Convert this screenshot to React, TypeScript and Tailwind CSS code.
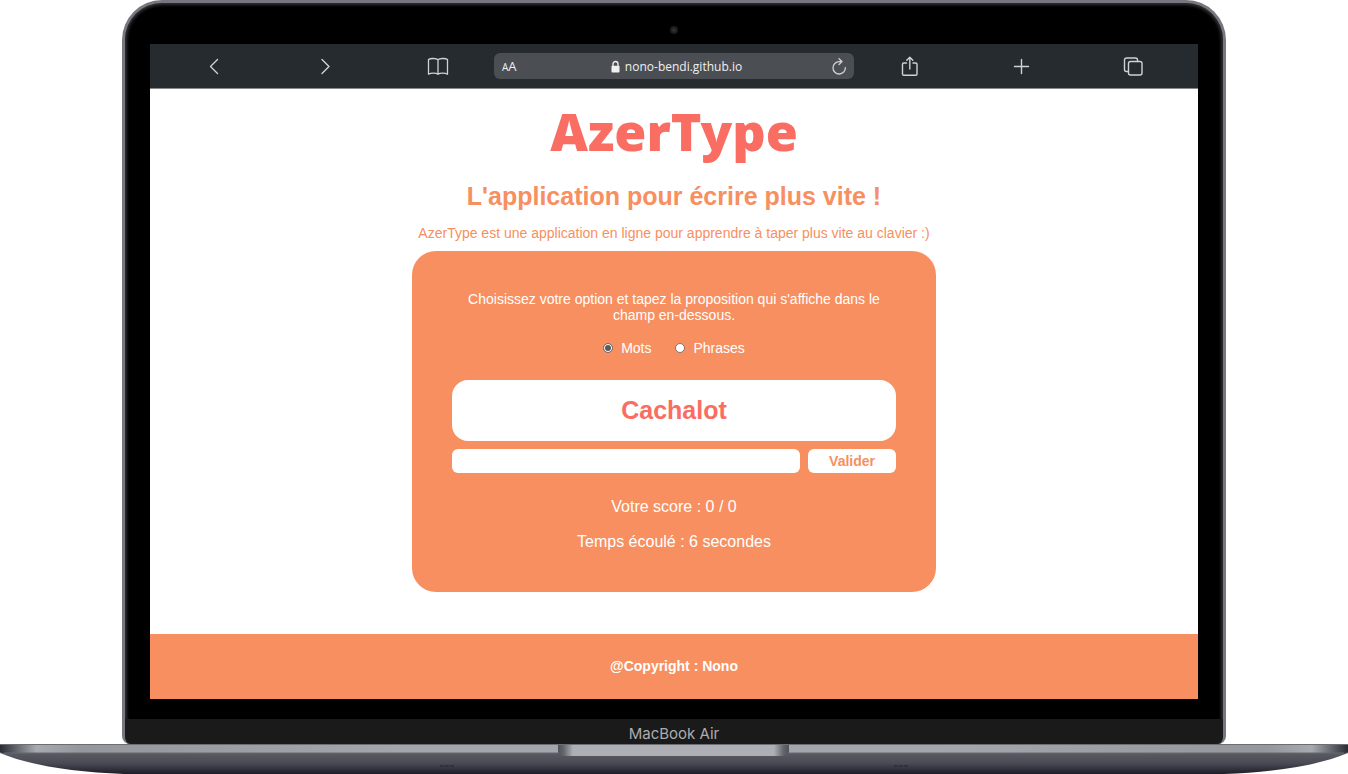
import { useState, type ReactNode } from "react";

function ToolButton({ label, children }: { label: string; children: ReactNode }) {
  return (
    <button type="button" aria-label={label} className="flex h-full items-center justify-center text-[#d0d2d4]">
      <svg width="24" height="24" viewBox="0 0 24 24" fill="none" stroke="currentColor" strokeWidth="1.4" strokeLinecap="round" strokeLinejoin="round" aria-hidden="true">
        {children}
      </svg>
    </button>
  );
}

function BrowserBar() {
  return (
    <div className="grid h-[45px] grid-cols-[repeat(3,1fr)_360px_repeat(3,1fr)] items-center border-b border-[#85888b] bg-[#262b2f] px-2">
      <ToolButton label="Page précédente">
        <path d="M15.5 5.500 8.5 12.500l7 7" />
      </ToolButton>
      <ToolButton label="Page suivante">
        <path d="m8 5.500 7 7-7 7" />
      </ToolButton>
      <ToolButton label="Signets">
        <path d="M12 5.800C10.500 4.200 4.500 4 2.500 5.600V20.200C5 18.800 10 18.800 12 20.300C14 18.800 19 18.800 21.500 20.200V5.600C19.500 4 13.500 4.200 12 5.800ZM12 5.800V20" strokeWidth="1.3" />
      </ToolButton>
      <div className="flex h-[26px] items-center justify-between rounded-md bg-[#4b4e53] pt-px pr-1 pl-2 font-['Open_Sans','Noto_Sans',sans-serif] text-[#f0f0f1]">
        <span className="flex w-5 items-baseline leading-none font-medium" aria-hidden="true">
          <span className="text-[10px]">A</span>
          <span className="text-[13px]">A</span>
        </span>
        <span className="flex items-center gap-1 text-xs">
          <svg width="11" height="14" viewBox="0 0 11 14" aria-hidden="true">
            <path d="M3 6V4a2.500 2.500 0 0 1 5 0V6" fill="none" stroke="currentColor" strokeWidth="1.300" />
            <rect x="1.500" y="5.800" width="8" height="6.700" rx="0.800" fill="currentColor" />
          </svg>
          nono-bendi.github.io
        </span>
        <button type="button" aria-label="Actualiser" className="w-5 text-[#d0d2d4]">
          <svg width="18" height="20" viewBox="1 0 18 20" fill="none" stroke="currentColor" strokeWidth="1.300" strokeLinecap="round" strokeLinejoin="round" aria-hidden="true">
            <path d="M16.400 10.600a6.200 6.200 0 1 1-6.200-6H12.400M10 1.800 13 4.600 10 7.500" />
          </svg>
        </button>
      </div>
      <ToolButton label="Partager">
        <path d="M8.500 9H5.800A1.300 1.300 0 0 0 4.500 10.300V20A1.300 1.300 0 0 0 5.800 21.300H17.700A1.300 1.300 0 0 0 19 20V10.300A1.300 1.300 0 0 0 17.700 9H15M11.800 15V3.500M8.800 6.300 11.800 3.200 14.800 6.300" />
      </ToolButton>
      <ToolButton label="Nouvel onglet">
        <path d="M11.500 5.500v14M4.500 12.500h14" />
      </ToolButton>
      <ToolButton label="Onglets">
        <rect x="6.500" y="7.500" width="13.500" height="13.500" rx="2" />
        <path d="M6.500 17.500H4.500A2 2 0 0 1 2.500 15.500V6A2 2 0 0 1 4.500 4H13.500A2 2 0 0 1 15.500 6V7.500" />
      </ToolButton>
    </div>
  );
}

const options = ["Mots", "Phrases"];

function TypingGame() {
  const [option, setOption] = useState("Mots");
  return (
    <form
      onSubmit={(event) => event.preventDefault()}
      className="mx-auto mt-[10px] flex w-1/2 flex-col rounded-3xl bg-[#f78f61] px-10 pt-10 pb-10 text-center text-white"
    >
      <p className="text-sm leading-4">
        Choisissez votre option et tapez la proposition qui s'affiche dans le champ en-dessous.
      </p>
      <div className="mt-[17px] flex justify-center gap-6 text-sm leading-4">
        {options.map((name) => (
          <label key={name} className="flex items-center gap-2">
            <input
              type="radio"
              name="option"
              value={name}
              checked={option === name}
              onChange={() => setOption(name)}
              className="size-[10px] appearance-none rounded-full border border-[#767676] bg-white checked:bg-[#5a5a5a] checked:shadow-[inset_0_0_0_1px_white]"
            />
            {name}
          </label>
        ))}
      </div>
      <div className="mt-6 flex h-[61px] items-center justify-center rounded-2xl bg-white text-[25px] font-bold text-[#f96d62]">
        Cachalot
      </div>
      <div className="mt-2 flex gap-2">
        <input aria-label="Votre saisie" type="text" className="h-6 min-w-0 flex-1 rounded-md bg-white px-2 text-sm text-black outline-none" />
        <button type="submit" className="h-6 rounded-md bg-white px-[21px] text-sm leading-4 font-bold text-[#f78f61]">
          Valider
        </button>
      </div>
      <p className="mt-6 text-base leading-5">Votre score : 0 / 0</p>
      <p className="mt-[15px] text-base leading-5">Temps écoulé : 6 secondes</p>
    </form>
  );
}

function LaptopBase() {
  return (
    <svg className="block h-[30px] w-full" viewBox="0 0 1348 30" preserveAspectRatio="none" aria-hidden="true">
      <defs>
        <linearGradient id="under" x1="0" y1="8" x2="0" y2="30" gradientUnits="userSpaceOnUse">
          <stop offset="0" stopColor="#5b5d65" />
          <stop offset="0.500" stopColor="#4a4b54" />
          <stop offset="1" stopColor="#1d1d29" />
        </linearGradient>
        <linearGradient id="deck" x1="0" x2="1" y1="0" y2="0">
          <stop offset="0" stopColor="#2b2c33" />
          <stop offset="0.012" stopColor="#63656c" />
          <stop offset="0.027" stopColor="#a9aab0" />
          <stop offset="0.060" stopColor="#96979c" />
          <stop offset="0.300" stopColor="#a5a6ab" />
          <stop offset="0.700" stopColor="#a5a6ab" />
          <stop offset="0.940" stopColor="#96979c" />
          <stop offset="0.973" stopColor="#a9aab0" />
          <stop offset="0.988" stopColor="#63656c" />
          <stop offset="1" stopColor="#2b2c33" />
        </linearGradient>
        <linearGradient id="notch" x1="0" x2="1" y1="0" y2="0">
          <stop offset="0" stopColor="#505158" />
          <stop offset="0.025" stopColor="#66676e" />
          <stop offset="0.065" stopColor="#aeafb4" />
          <stop offset="0.935" stopColor="#aeafb4" />
          <stop offset="0.975" stopColor="#66676e" />
          <stop offset="1" stopColor="#505158" />
        </linearGradient>
      </defs>
      <path d="M0 6V9C28 21 72 28 124 30H1224C1276 28 1320 21 1348 9V6Z" fill="url(#under)" />
      <path d="M0 0H1348V8L1345 9H3L0 8Z" fill="url(#deck)" />
      <path d="M0 0.500H1348" stroke="#6c6e73" />
      <path d="M4 9H1344" stroke="#66686e" />
      <path d="M558 1H789V8Q787 12 780 12H567Q560 12 558 8Z" fill="url(#notch)" />
      <path d="M440 22h14M894 22h14" stroke="#30313a" strokeWidth="2" strokeDasharray="4 1" />
    </svg>
  );
}

export default function App() {
  return (
    <div className="flex min-h-screen flex-col overflow-hidden bg-white font-['Liberation_Sans',Arial,sans-serif]">
      <div className="mx-[122px] flex flex-1 flex-col rounded-t-[40px] rounded-b-lg border-x-[3px] border-t-[3px] border-[#77777f] bg-black shadow-[inset_0_0_3px_2px_#303034]">
        <div className="flex h-[41px] shrink-0 items-center justify-center pt-3">
          <span className="size-2 rounded-full border-2 border-[#1d1d1f] bg-[#303033]" />
        </div>
        <div className="mx-[25px] flex flex-1 flex-col bg-white">
          <BrowserBar />
          <main className="flex-1 text-center text-[#f78f61]">
            <h1 className="mt-[10px] font-['Noto_Sans','Open_Sans',sans-serif] text-[52px] leading-[64px] font-black text-[#f96d62]">AzerType</h1>
            <h2 className="mt-[18px] text-[25px] leading-[30px] font-bold">L'application pour écrire plus vite !</h2>
            <p className="mt-[14px] text-sm leading-4">
              AzerType est une application en ligne pour apprendre à taper plus vite au clavier :)
            </p>
            <TypingGame />
          </main>
          <footer className="flex h-[65px] items-center justify-center bg-[#f78f61] pb-[2px] text-sm font-bold text-white">
            @Copyright : Nono
          </footer>
        </div>
        <div className="mt-5 flex h-[25px] items-center justify-center rounded-b-lg bg-[#1a1a1a] pt-1 font-['Inter',sans-serif] text-[15px] leading-5 text-[#acacb0]">
          MacBook Air
        </div>
      </div>
      <LaptopBase />
    </div>
  );
}
